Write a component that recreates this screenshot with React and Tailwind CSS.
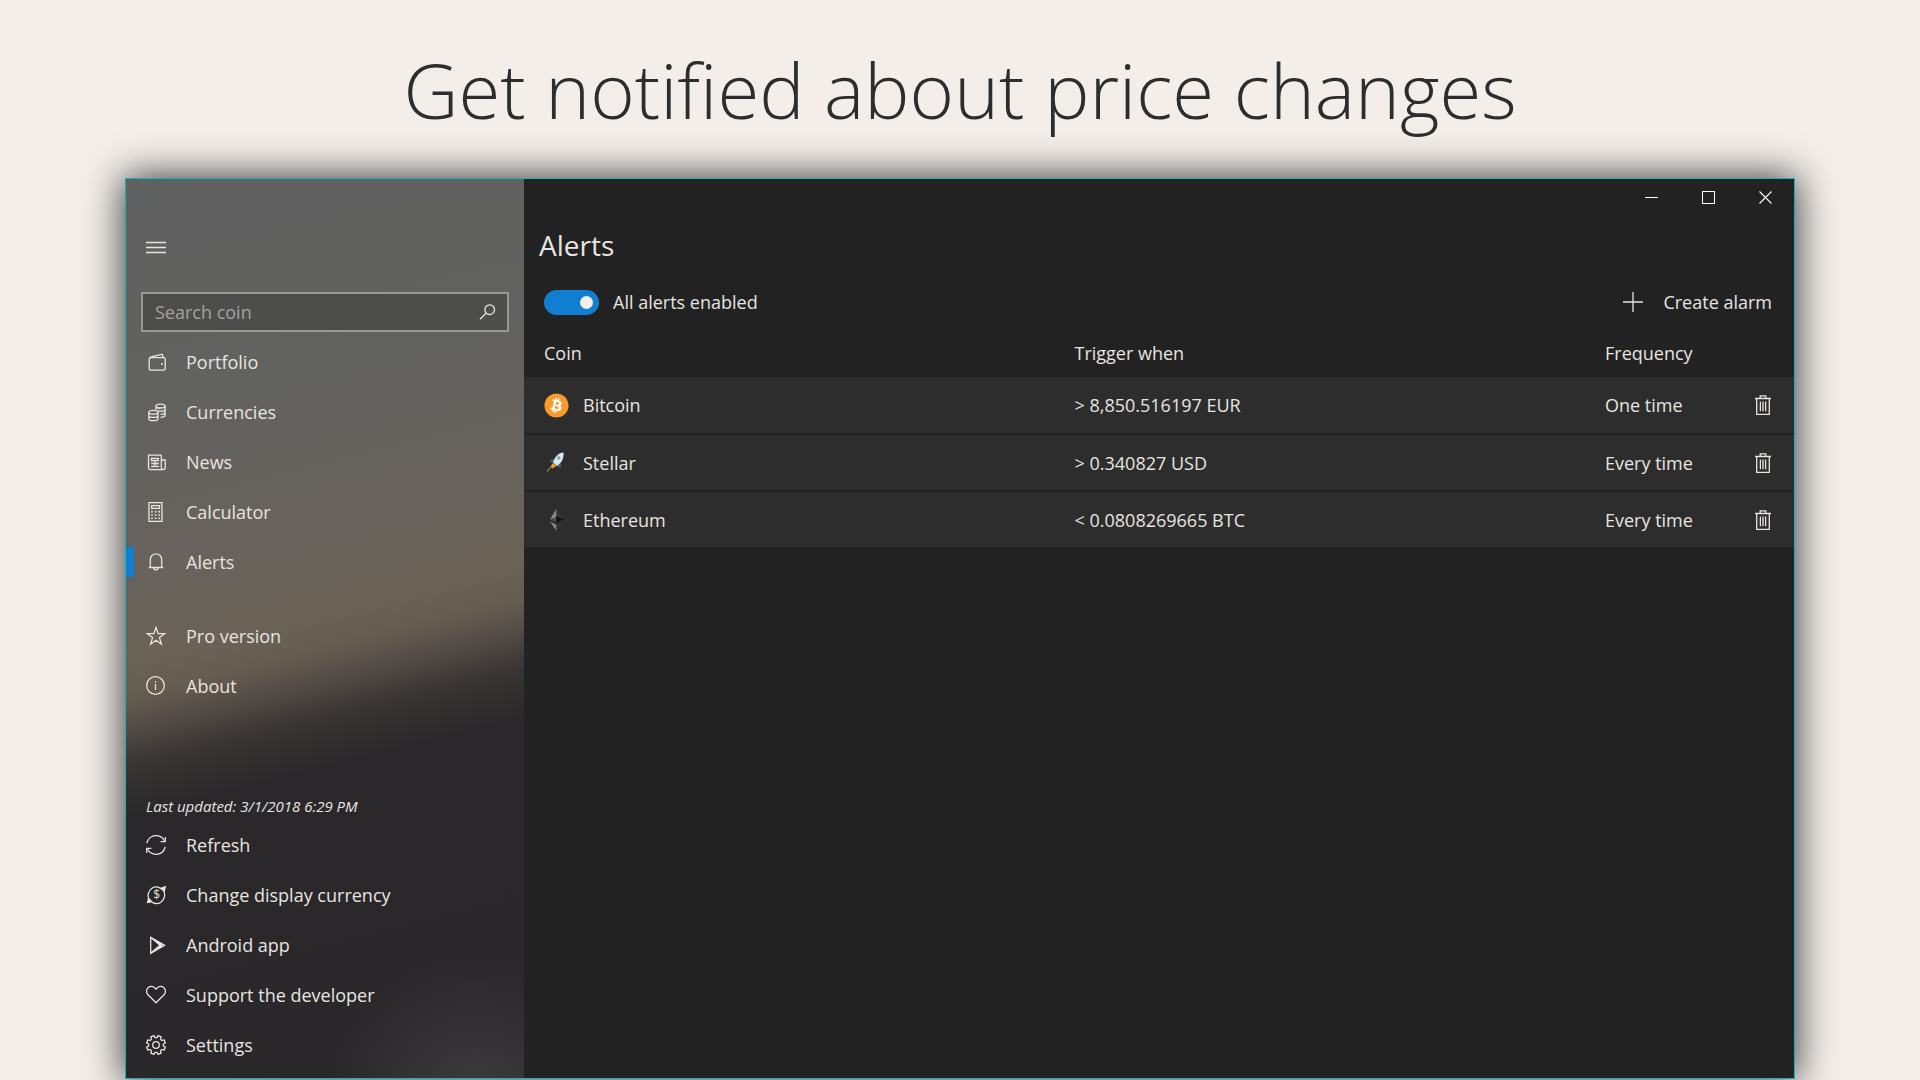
import React from "react";
import {FaBitcoin} from "react-icons/fa";

function Icon({children, className = ""}) {
    return (
        <svg
            viewBox="0 0 20 20"
            fill="none"
            stroke="currentColor"
            strokeWidth="1.3"
            aria-hidden="true"
            className={"w-5 h-5 shrink-0 " + className}
        >
            {children}
        </svg>
    );
}

// eight teeth, each one: root, tip, tip, root
function gearPath() {
    const points = [];
    for (let i = 0; i < 8; i++) {
        [[-15, 7.4], [-10, 9.6], [10, 9.6], [15, 7.4]].forEach(([offset, radius]) => {
            const angle = (i * 45 + 22.5 + offset) * Math.PI / 180;
            points.push((10 + radius * Math.cos(angle)).toFixed(2) + " " + (10 + radius * Math.sin(angle)).toFixed(2));
        });
    }
    return "M" + points.join("L") + "Z";
}

const icons = {
    menu: <path d="M0 4.5h20M0 9.5h20M0 14.5h20"/>,
    search: <path d="M9 11.2 3 17.2M12.7 2.9a4.8 4.8 0 1 1 0 9.6 4.8 4.8 0 0 1 0-9.6z"/>,
    portfolio: <>
        <rect x="3.2" y="5.6" width="16" height="12.6" rx="1.6"/>
        <path d="M3.4 6.4 4.6 5.2 15.5 2.4q1.2-.2 1.2 1v2.2"/>
        <path d="M15 11.9h1.8" strokeWidth="1.8"/>
    </>,
    currencies: <>
        <ellipse cx="14.6" cy="4" rx="4.5" ry="1.9"/>
        <path d="M10.1 4v4.2M19.1 4v9.3c0 1.1-1.9 2-4.6 2M19.1 7.2c0 1.1-2 2-4.5 2-1 0-2-.1-2.8-.4M19.1 10.3c0 1.1-1.9 2-4.5 2M10.1 4.3c.3 1.2 2 1.8 4.5 1.8"/>
        <ellipse cx="7.4" cy="10.2" rx="4.6" ry="1.9"/>
        <path d="M2.8 10.2v6.5c0 1.1 2 2 4.6 2s4.6-.9 4.6-2v-6.5M2.8 13.4c0 1.1 2 2 4.6 2s4.6-.9 4.6-2"/>
    </>,
    news: <>
        <path d="M15.3 3.2H2.5v12.6q0 1.8 1.8 1.8h13q1.9 0 1.9-1.8V8h-3.9M15.3 3.2v12.5q0 1.8 1.6 1.8"/>
        <path d="M5.5 6.5h6.8v2.2H5.5zM5.2 11.5h3.2M9.8 11.5h3M5.2 14.5h3.2M9.8 14.5h3M9 8.8v6.3"/>
    </>,
    calculator: <>
        <path d="M3 .6h13v18.8H3zM5.7 3.6h7.8v2.8H5.7z"/>
        <path d="M5.2 9.6h9M5.2 13h9M5.2 16.3h9" strokeWidth="1.6" strokeDasharray="1.6 2"/>
    </>,
    alerts: <path d="M2.7 15.5h14.6M4.3 15.5V7.6a5.7 5.7 0 0 1 11.4 0v7.9M7.8 15.7a2.2 2.2 0 0 0 4.4 0"/>,
    pro: <path d="M10 1.4 12.2 7.7H18.8L13.5 11.6 15.4 18.2 10 14.2 4.6 18.2 6.5 11.6 1.2 7.7H7.8Z"/>,
    about: <>
        <circle cx="9.5" cy="9.5" r="8.8"/>
        <path d="M9.5 8v6M9.5 5v1.5"/>
    </>,
    refresh: <>
        <path d="M.8 8.2C1.9 3.7 5.6.7 10 .7c3.6 0 6.7 1.9 8.4 5M19.2 12C18 16.4 14.4 19.3 10 19.3c-3.6 0-6.7-1.9-8.4-5"/>
        <path d="M19.3 2v4.7h-4.7M.7 18v-4.7h4.7"/>
    </>,
    currency: <>
        <path d="M3.6 15.5C.8 11.5 2 5.8 6 3.3c3-1.9 6.4-1.6 9 .3M17.2 5.2c2.7 4 1.5 9.4-2.3 12-2.7 1.7-6 1.7-8.6.2"/>
        <path d="M19.2 1.8 18.3 6 14.7 3.4ZM1.5 17.4 2.7 13.5 5.8 16.7Z" fill="currentColor"/>
        <text x="10.6" y="14.4" textAnchor="middle" fontSize="12" fill="currentColor" stroke="none">$</text>
    </>,
    android: <path d="M4.7 2.3 18.6 10.3 4.7 18.3ZM4.9 2.6 14 10.3 4.9 18M11.2 6.2 15.8 10.3 11.2 14.4"/>,
    support: <path d="M10 17.8 2 9.8A5 5 0 0 1 2.3 2.5c2-1.8 5.2-1.4 7 .8L10 4.2l.7-.9c1.8-2.2 5-2.6 7-.8A5 5 0 0 1 18 9.8Z"/>,
    settings: <>
        <circle cx="10" cy="10" r="3.3"/>
        <path strokeLinejoin="round" d={gearPath()}/>
    </>,
    plus: <path d="M0 10h20M10 0v20"/>,
    trash: <path d="M2 3.5h16M3.7 3.5v15.8h12.6V3.5M7.2 3.3V.9h5.6v2.4M7.4 6.5v9.7M10 6.5v9.7M12.6 6.5v9.7"/>,
};

const mainLinks = [
    {icon: "portfolio", text: "Portfolio"},
    {icon: "currencies", text: "Currencies"},
    {icon: "news", text: "News"},
    {icon: "calculator", text: "Calculator"},
    {icon: "alerts", text: "Alerts", active: true},
];

const infoLinks = [
    {icon: "pro", text: "Pro version"},
    {icon: "about", text: "About"},
];

const footerLinks = [
    {icon: "refresh", text: "Refresh"},
    {icon: "currency", text: "Change display currency"},
    {icon: "android", text: "Android app"},
    {icon: "support", text: "Support the developer"},
    {icon: "settings", text: "Settings"},
];

const alerts = [
    {coin: "Bitcoin", sign: ">", value: "8,850.516197 EUR", frequency: "One time"},
    {coin: "Stellar", sign: ">", value: "0.340827 USD", frequency: "Every time"},
    {coin: "Ethereum", sign: "<", value: "0.0808269665 BTC", frequency: "Every time"},
];

function CoinLogo({coin}) {
    if (coin === "Bitcoin") {
        return <FaBitcoin className="w-[25px] h-[25px] text-[#f99a2c] rounded-full bg-[radial-gradient(circle,white_55%,transparent_60%)]"/>;
    }
    if (coin === "Stellar") {
        return (
            <svg viewBox="0 0 25 25" className="w-[25px] h-[25px]" aria-hidden="true">
                <path d="M3 21.5 7 17" stroke="#6d7073" strokeWidth="1.5"/>
                <path d="M10.5 8.5 5.5 10.5 8.5 13ZM17 13.5 16.5 18 13 16Z" fill="#4c6379"/>
                <path d="M9 13 6.5 16.5 8.5 18.5 12.5 16Z" fill="#f59a1c"/>
                <path d="M19.5 2.5C14 3 10.5 7.5 9 12.5l4 3.5c4.5-3 7-7.5 6.5-13.5Z" fill="#d6ebf2"/>
                <circle cx="14.8" cy="8" r="1.7" fill="#7fa0b4"/>
            </svg>
        );
    }
    return (
        <svg viewBox="0 0 25 25" className="w-[25px] h-[25px]" aria-hidden="true">
            <path d="M12.5 1.5V10L6 12.5Z" fill="#8a8a8a"/>
            <path d="M12.5 10v5.5L6 12.5Z" fill="#4d4d4d"/>
            <path d="M6 14.5 12.5 18v6Z" fill="#8a8a8a"/>
            <path d="M12.5 1.5V10L19 12.5Z" fill="#353535"/>
            <path d="M12.5 9 19.5 12.5 12.5 16Z" fill="#141414"/>
            <path d="M12.5 18 18 14.5 12.5 24Z" fill="#353535"/>
        </svg>
    );
}

function NavList({links, className = ""}) {
    return (
        <ul className={className}>
            {links.map(({icon, text, active}) => (
                <li key={text}>
                    <a
                        href="#"
                        aria-current={active ? "page" : undefined}
                        className="flex items-center h-[50px] pr-5"
                    >
                        <span className={"w-2 h-[30px] mr-3 " + (active ? "bg-[#107fd2]" : "")}/>
                        <Icon>{icons[icon]}</Icon>
                        <span className="ml-5">{text}</span>
                    </a>
                </li>
            ))}
        </ul>
    );
}

function Sidebar() {
    return (
        <nav className="flex flex-col w-[398px] shrink-0 pt-11 pb-2 bg-[radial-gradient(circle_at_88%_103%,#3e3c3f_0%,transparent_15%),linear-gradient(166deg,#606161_0%,#62625f_24%,#68625d_40%,#6b6357_48%,#665d51_52%,#544c46_55%,#383433_59%,#2a282a_64%,#292729_100%)]">
            <button type="button" aria-label="Menu" className="ml-5 w-5 h-[50px]">
                <Icon>{icons.menu}</Icon>
            </button>
            <form className="flex items-center mx-[15px] mt-[19px] mb-[5px] h-10 border-2 border-[#9b9794] bg-black/20">
                <input
                    type="text"
                    aria-label="Search coin"
                    placeholder="Search coin"
                    className="flex-1 min-w-0 px-3 outline-none placeholder:text-[#a5a29f]"
                />
                <button type="button" aria-label="Search" className="w-10 flex justify-center">
                    <Icon>{icons.search}</Icon>
                </button>
            </form>
            <NavList links={mainLinks}/>
            <NavList links={infoLinks} className="mt-6"/>
            <p className="mt-auto ml-5 pt-6 text-[15px] leading-7 italic">Last updated: 3/1/2018 6:29 PM</p>
            <NavList links={footerLinks}/>
        </nav>
    );
}

function CaptionButtons() {
    return (
        <div className="flex justify-end h-9">
            <button type="button" aria-label="Minimize" className="w-[57px] flex justify-center items-center">
                <span className="w-[13px] h-px bg-white"/>
            </button>
            <button type="button" aria-label="Maximize" className="w-[57px] flex justify-center items-center">
                <span className="w-[13px] h-[13px] border border-white"/>
            </button>
            <button type="button" aria-label="Close" className="w-[57px] flex justify-center items-center">
                <svg viewBox="0 0 13 13" stroke="white" strokeWidth="1.1" className="w-[13px] h-[13px]" aria-hidden="true">
                    <path d="M.5.5l12 12M12.5.5l-12 12"/>
                </svg>
            </button>
        </div>
    );
}

function AlertsTable() {
    return (
        <table className="w-full table-fixed text-left">
            <colgroup>
                <col/>
                <col/>
                <col className="w-[151px]"/>
                <col className="w-[58px]"/>
            </colgroup>
            <thead>
                <tr className="h-12">
                    <th className="pl-5 font-normal">Coin</th>
                    <th className="pl-5 font-normal">Trigger when</th>
                    <th className="pl-5 font-normal">Frequency</th>
                    <td/>
                </tr>
            </thead>
            <tbody>
                {alerts.map(({coin, sign, value, frequency}) => (
                    <tr key={coin} className="h-[57px] bg-[#2d2d2d] border-b-2 border-[#222222]">
                        <td className="pl-5">
                            <div className="flex items-center gap-[14px]">
                                <CoinLogo coin={coin}/>
                                {coin}
                            </div>
                        </td>
                        <td className="pl-5">{sign} {value}</td>
                        <td className="pl-5">{frequency}</td>
                        <td className="pl-[17px]">
                            <button type="button" aria-label={"Delete " + coin + " alert"} className="block">
                                <Icon>{icons.trash}</Icon>
                            </button>
                        </td>
                    </tr>
                ))}
            </tbody>
        </table>
    );
}

export default function App() {
    return (
        <div className="min-h-screen flex flex-col px-[125px] pb-px bg-[#f3eeea] overflow-hidden font-['Segoe_UI','Open_Sans',sans-serif] text-lg text-[#e8e4e0]">
            <h1 className="h-[178px] pt-9 text-center text-[76px] leading-[108px] font-light text-[#2d2d2d]">
                Get notified about price changes
            </h1>
            <div className="flex-1 flex border border-[#12b3c0] bg-[#222222] shadow-[0_0_36px_2px_rgba(0,0,0,0.75)]">
                <Sidebar/>
                <main className="flex-1 min-w-0">
                    <CaptionButtons/>
                    <h2 className="pl-[15px] text-[28px] leading-[60px]">Alerts</h2>
                    <div className="flex items-center justify-between h-[54px] pl-5 pr-[22px]">
                        <label className="flex items-center gap-[14px]">
                            <input
                                type="checkbox"
                                role="switch"
                                defaultChecked
                                className="appearance-none flex items-center justify-end w-[55px] h-[25px] pr-[6px] rounded-full bg-[#107fd2] before:w-[13px] before:h-[13px] before:rounded-full before:bg-[#f3eeea]"
                            />
                            All alerts enabled
                        </label>
                        <button type="button" className="flex items-center gap-5">
                            <Icon>{icons.plus}</Icon>
                            Create alarm
                        </button>
                    </div>
                    <AlertsTable/>
                </main>
            </div>
        </div>
    );
}
